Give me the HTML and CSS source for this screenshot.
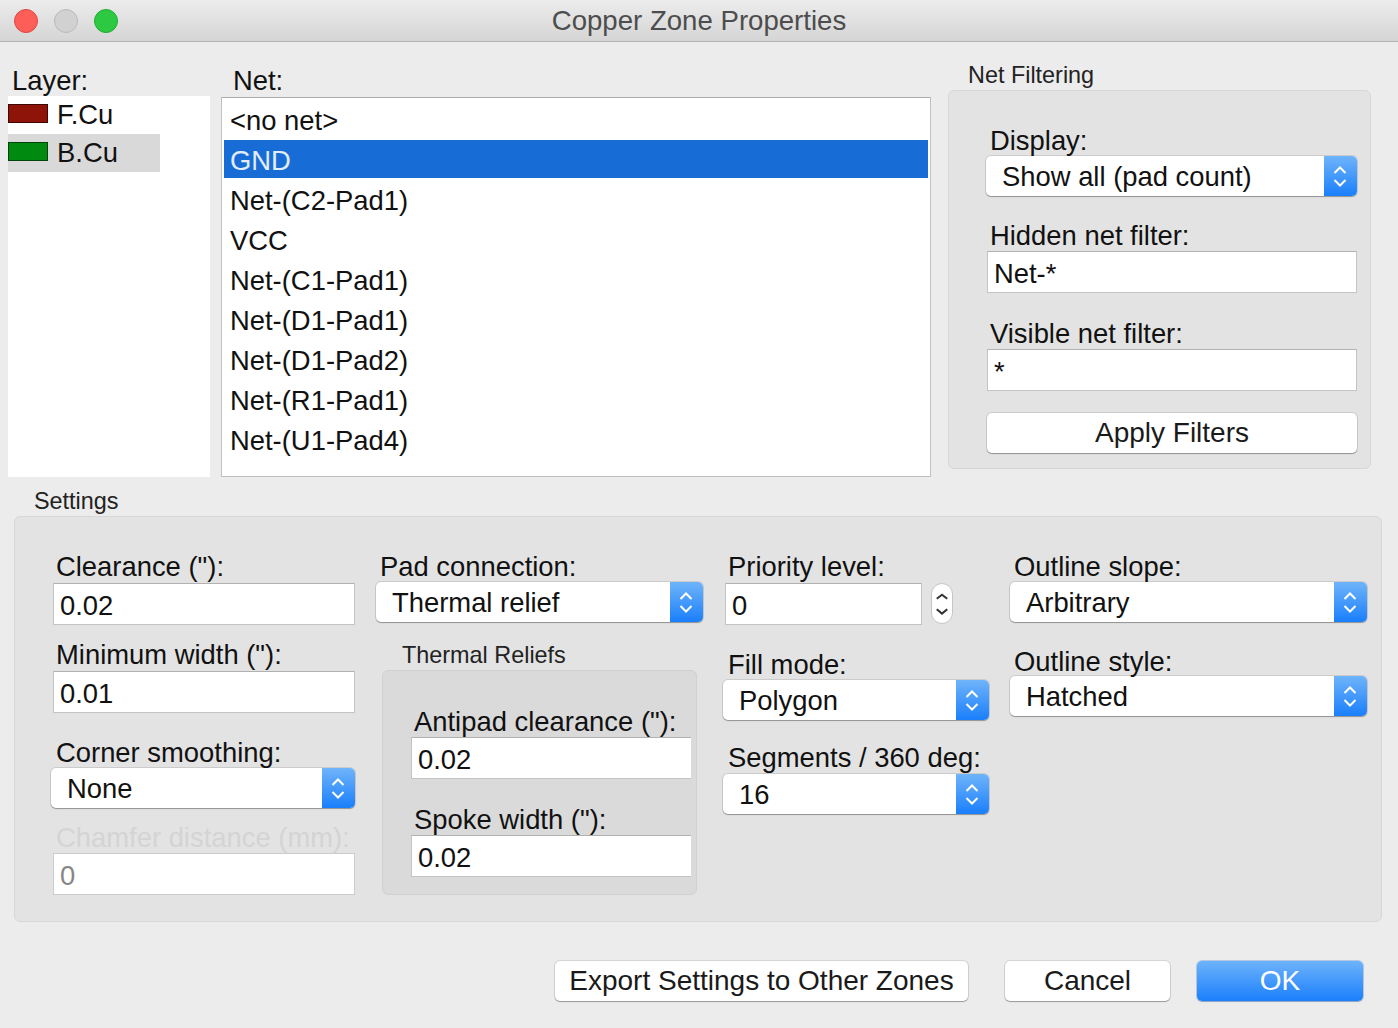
FILE: index.html
```html
<!DOCTYPE html>
<html>
<head>
<meta charset="utf-8">
<title>Copper Zone Properties</title>
<link rel="stylesheet" href="styles.css">
</head>
<body>
<div class="titlebar">
  <div class="lights">
    <span class="light red"></span>
    <span class="light grey"></span>
    <span class="light green"></span>
  </div>
  <div class="title">Copper Zone Properties</div>
  <div></div>
</div>

<div class="top">
  <div class="col-layer">
    <div class="lbl lbl-layer">Layer:</div>
    <div class="layer-list">
      <div class="layer-row"><span class="swatch swatch-f"></span><span>F.Cu</span></div>
      <div class="layer-row selected"><span class="swatch swatch-b"></span><span>B.Cu</span></div>
    </div>
  </div>

  <div class="col-net">
    <div class="lbl lbl-net">Net:</div>
    <div class="net-list">
      <div class="net-row">&lt;no net&gt;</div>
      <div class="net-row selected">GND</div>
      <div class="net-row">Net-(C2-Pad1)</div>
      <div class="net-row">VCC</div>
      <div class="net-row">Net-(C1-Pad1)</div>
      <div class="net-row">Net-(D1-Pad1)</div>
      <div class="net-row">Net-(D1-Pad2)</div>
      <div class="net-row">Net-(R1-Pad1)</div>
      <div class="net-row">Net-(U1-Pad4)</div>
    </div>
  </div>

  <div class="col-filter">
    <div class="group-title filter-title">Net Filtering</div>
    <div class="group filter-group">
      <div class="lbl pl4 mb1">Display:</div>
      <div class="select">
        <span class="select-text">Show all (pad count)</span>
        <span class="select-arrow"><svg width="33" height="40" viewBox="0 0 33 40"><path d="M10.5 17 L16 11.5 L21.5 17 M10.5 24 L16 29.5 L21.5 24" fill="none" stroke="#fff" stroke-width="2"/></svg></span>
      </div>
      <div class="lbl pl4 mt24 mb1">Hidden net filter:</div>
      <div class="input ml1">Net-*</div>
      <div class="lbl pl4 mt25 mb1">Visible net filter:</div>
      <div class="input ml1">*</div>
      <div class="button apply ml1">Apply Filters</div>
    </div>
  </div>
</div>

<div class="group-title settings-title">Settings</div>
<div class="group settings-group">
  <div class="col col1">
    <div class="lbl pl5 mb2">Clearance ("):</div>
    <div class="input ml2">0.02</div>
    <div class="lbl pl5 mt14 mb2">Minimum width ("):</div>
    <div class="input ml2">0.01</div>
    <div class="lbl pl5 mt24 mb1">Corner smoothing:</div>
    <div class="select">
      <span class="select-text">None</span>
      <span class="select-arrow"><svg width="33" height="40" viewBox="0 0 33 40"><path d="M10.5 17 L16 11.5 L21.5 17 M10.5 24 L16 29.5 L21.5 24" fill="none" stroke="#fff" stroke-width="2"/></svg></span>
    </div>
    <div class="lbl pl5 mt14 mb1 disabled">Chamfer distance (mm):</div>
    <div class="input ml2 input-disabled">0</div>
  </div>

  <div class="col col2">
    <div class="lbl pl4 mb1">Pad connection:</div>
    <div class="select">
      <span class="select-text">Thermal relief</span>
      <span class="select-arrow"><svg width="33" height="40" viewBox="0 0 33 40"><path d="M10.5 17 L16 11.5 L21.5 17 M10.5 24 L16 29.5 L21.5 24" fill="none" stroke="#fff" stroke-width="2"/></svg></span>
    </div>
    <div class="group-title thermal-title">Thermal Reliefs</div>
    <div class="group thermal-group">
      <div class="lbl pl3 mb1">Antipad clearance ("):</div>
      <div class="input input-clipped">0.02</div>
      <div class="lbl pl3 mt25 mb1">Spoke width ("):</div>
      <div class="input input-clipped">0.02</div>
    </div>
  </div>

  <div class="col col3">
    <div class="lbl pl5 mb2">Priority level:</div>
    <div class="spin-row">
      <div class="input priority">0</div>
      <div class="spinner"><svg width="21" height="40" viewBox="0 0 21 40"><path d="M5 14.5 L10.5 10.3 L16 14.5 M5 25.5 L10.5 30 L16 25.5" fill="none" stroke="#333" stroke-width="2.2"/></svg></div>
    </div>
    <div class="lbl pl5 mt24 mb1">Fill mode:</div>
    <div class="select">
      <span class="select-text">Polygon</span>
      <span class="select-arrow"><svg width="33" height="40" viewBox="0 0 33 40"><path d="M10.5 17 L16 11.5 L21.5 17 M10.5 24 L16 29.5 L21.5 24" fill="none" stroke="#fff" stroke-width="2"/></svg></span>
    </div>
    <div class="lbl pl5 mt22 mb2">Segments / 360 deg:</div>
    <div class="select">
      <span class="select-text">16</span>
      <span class="select-arrow"><svg width="33" height="40" viewBox="0 0 33 40"><path d="M10.5 17 L16 11.5 L21.5 17 M10.5 24 L16 29.5 L21.5 24" fill="none" stroke="#fff" stroke-width="2"/></svg></span>
    </div>
  </div>

  <div class="col col4">
    <div class="lbl pl4 mb1">Outline slope:</div>
    <div class="select">
      <span class="select-text">Arbitrary</span>
      <span class="select-arrow"><svg width="33" height="40" viewBox="0 0 33 40"><path d="M10.5 17 L16 11.5 L21.5 17 M10.5 24 L16 29.5 L21.5 24" fill="none" stroke="#fff" stroke-width="2"/></svg></span>
    </div>
    <div class="lbl pl4 mt24">Outline style:</div>
    <div class="select">
      <span class="select-text">Hatched</span>
      <span class="select-arrow"><svg width="33" height="40" viewBox="0 0 33 40"><path d="M10.5 17 L16 11.5 L21.5 17 M10.5 24 L16 29.5 L21.5 24" fill="none" stroke="#fff" stroke-width="2"/></svg></span>
    </div>
  </div>
</div>

<div class="buttons">
  <div class="button btn-export">Export Settings to Other Zones</div>
  <div class="button btn-cancel">Cancel</div>
  <div class="button btn-ok">OK</div>
</div>
</body>
</html>
```

FILE: styles.css
```css
html, body {
  margin: 0;
  padding: 0;
}
body {
  width: 1398px;
  height: 1028px;
  overflow: hidden;
  background: #ececec;
  font-family: "Liberation Sans", Arial, Helvetica, sans-serif;
  color: #111;
}

/* title bar */
.titlebar {
  height: 41px;
  border-bottom: 1px solid #b2b2b2;
  background: linear-gradient(#ececec, #d5d5d5);
  display: grid;
  grid-template-columns: 1fr auto 1fr;
  align-items: center;
}
.lights {
  display: flex;
  gap: 16px;
  padding-left: 14px;
  margin-top: -1px;
}
.light {
  width: 24px;
  height: 24px;
  border-radius: 50%;
  box-sizing: border-box;
  border: 1px solid;
}
.red { background: #fd5f58; border-color: #e0463f; }
.grey { background: #d1d1d1; border-color: #bababa; }
.green { background: #2ec942; border-color: #1ead2f; }
.title {
  font-size: 27.6px;
  line-height: 42px;
  color: #4d4d4d;
}

/* generic */
.lbl {
  font-size: 27.4px;
  line-height: 32px;
  height: 30px;
  white-space: nowrap;
}
.pl3 { padding-left: 3px; }
.pl4 { padding-left: 4px; }
.pl5 { padding-left: 5px; }
.mb1 { margin-bottom: 1px; }
.mb2 { margin-bottom: 2px; }
.mt14 { margin-top: 14px; }
.mt22 { margin-top: 22px; }
.mt24 { margin-top: 24px; }
.mt25 { margin-top: 25px; }
.ml1 { margin-left: 1px; }
.ml2 { margin-left: 2px; }

.group-title {
  font-size: 23.4px;
  line-height: 27px;
  height: 26px;
  color: #222;
  white-space: nowrap;
}
.group {
  background: #e3e3e3;
  border: 1px solid #d7d7d7;
  border-radius: 6px;
  box-sizing: border-box;
}

.input {
  height: 42px;
  box-sizing: border-box;
  background: #fff;
  border: 1px solid #c4c4c4;
  border-top-color: #b1b1b1;
  font-size: 27.4px;
  line-height: 44px;
  padding-left: 6px;
  white-space: nowrap;
  overflow: hidden;
}
.input-disabled {
  color: #868686;
  border-color: #cbcbcb;
}
.disabled {
  color: #d4d4d4;
}

.select {
  display: flex;
  height: 40px;
  background: #fff;
  border-radius: 5px;
  overflow: hidden;
  box-shadow: 0 0 0 1px rgba(0, 0, 0, 0.1), 0 1px 1px rgba(0, 0, 0, 0.28);
}
.select-text {
  flex: 1;
  padding-left: 16px;
  font-size: 27.4px;
  line-height: 42px;
  white-space: nowrap;
}
.select-arrow {
  width: 33px;
  height: 40px;
  background: linear-gradient(#6fb4fb, #1a7ffb);
  display: flex;
}

.button {
  height: 40px;
  box-sizing: border-box;
  background: #fff;
  border-radius: 5px;
  box-shadow: 0 0 0 1px rgba(0, 0, 0, 0.1), 0 1px 1px rgba(0, 0, 0, 0.28);
  font-size: 28px;
  line-height: 40px;
  text-align: center;
  white-space: nowrap;
  color: #1a1a1a;
}

/* top section */
.top {
  display: flex;
  height: 435px;
}
.col-layer {
  margin-left: 8px;
  width: 202px;
  display: flex;
  flex-direction: column;
}
.lbl-layer {
  margin-top: 23px;
  padding-left: 4px;
  margin-bottom: 1px;
}
.layer-list {
  flex: 1;
  background: #fff;
}
.layer-row {
  display: flex;
  align-items: center;
  width: 152px;
  height: 38px;
  font-size: 27.4px;
  line-height: 38px;
}
.layer-row.selected {
  background: #d9d9d9;
}
.swatch {
  width: 40px;
  height: 19px;
  box-sizing: border-box;
  border: 1px solid;
  margin-right: 9px;
  margin-top: -3px;
}
.swatch-f { background: #8e1309; border-color: #3d0804; }
.swatch-b { background: #008b10; border-color: #03420a; }

.col-net {
  margin-left: 11px;
  width: 710px;
  display: flex;
  flex-direction: column;
}
.lbl-net {
  margin-top: 23px;
  padding-left: 12px;
  margin-bottom: 2px;
}
.net-list {
  flex: 1;
  box-sizing: border-box;
  background: #fff;
  border: 1px solid #c0c0c0;
  border-top-color: #acacac;
  padding: 2px 2px 0;
  display: flex;
  flex-direction: column;
  gap: 2px;
}
.net-row {
  height: 38px;
  line-height: 42px;
  padding-left: 6px;
  font-size: 27.4px;
  white-space: nowrap;
}
.net-row.selected {
  background: #176dd5;
  color: #e3edfa;
}

.col-filter {
  margin-left: 17px;
  width: 423px;
}
.filter-title {
  margin-top: 20px;
  padding-left: 20px;
  margin-bottom: 2px;
}
.filter-group {
  height: 379px;
  padding: 34px 13px 0 37px;
}
.apply {
  margin-top: 22px;
}

/* settings */
.settings-title {
  margin-top: 11px;
  padding-left: 34px;
  margin-bottom: 2px;
}
.settings-group {
  margin: 0 16px 0 14px;
  height: 406px;
  padding: 34px 0 0 36px;
  display: flex;
}
.col1 { width: 304px; }
.col2 { width: 327px; margin-left: 21px; }
.col3 { width: 266px; margin-left: 20px; }
.col4 { width: 357px; margin-left: 21px; }

.thermal-title {
  margin-top: 20px;
  padding-left: 26px;
  margin-bottom: 2px;
}
.thermal-group {
  width: 315px;
  margin-left: 6px;
  height: 225px;
  background: #dadada;
  border-color: #d0d0d0;
  padding: 35px 0 0 28px;
  overflow: hidden;
}
.input-clipped {
  width: 280px;
  border-right: none;
}

.spin-row {
  display: flex;
  align-items: flex-start;
}
.priority {
  margin-left: 2px;
  width: 197px;
}
.spinner {
  margin-left: 9px;
  width: 22px;
  height: 41px;
  box-sizing: border-box;
  background: #fff;
  border: 1px solid #c6c6c6;
  border-radius: 11px;
  display: flex;
  justify-content: center;
}

/* bottom buttons */
.buttons {
  display: flex;
  justify-content: flex-end;
  margin-top: 39px;
  padding-right: 35px;
}
.btn-export { width: 413px; }
.btn-cancel { width: 165px; margin-left: 37px; }
.btn-ok {
  width: 166px;
  margin-left: 27px;
  background: linear-gradient(#6db3fb, #1b7ffb);
  color: #fff;
  box-shadow: 0 0 0 1px rgba(20, 90, 200, 0.25), 0 1px 1px rgba(0, 0, 0, 0.2);
}
```
